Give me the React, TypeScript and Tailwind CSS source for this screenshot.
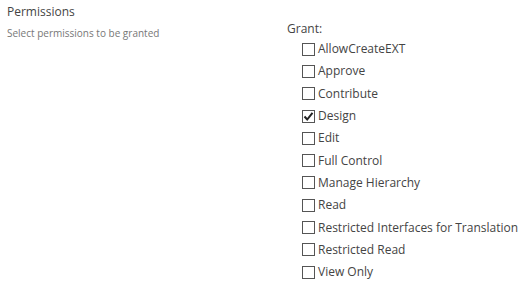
const permissions = [
  { name: 'AllowCreateEXT', checked: false },
  { name: 'Approve', checked: false },
  { name: 'Contribute', checked: false },
  { name: 'Design', checked: true },
  { name: 'Edit', checked: false },
  { name: 'Full Control', checked: false },
  { name: 'Manage Hierarchy', checked: false },
  { name: 'Read', checked: false },
  { name: 'Restricted Interfaces for Translation', checked: false },
  { name: 'Restricted Read', checked: false },
  { name: 'View Only', checked: false },
];

function CheckBox({ checked }: { checked: boolean }) {
  return (
    <span className="w-[13px] h-[13px] border border-[#555] bg-white flex items-center justify-center shrink-0">
      {checked && (
        <svg width="11" height="11" viewBox="0 0 11 11">
          <path d="M1.5 5.5 L4.2 8.5 L9.5 1.8" fill="none" stroke="#222" strokeWidth="2" />
        </svg>
      )}
    </span>
  );
}

export default function App() {
  return (
    <div
      className="w-[529px] h-[285px] bg-white flex text-[#444]"
      style={{ fontFamily: '"Open Sans", "Noto Sans", sans-serif' }}
    >
      <div className="w-[287px] pl-[7px] pt-[3px]">
        <div className="text-[12px] leading-[18px]">Permissions</div>
        <div className="text-[10px] leading-[14px] text-[#777] mt-[5px]">
          Select permissions to be granted
        </div>
      </div>
      <div className="pt-[20px]">
        <div className="text-[12px] leading-[18px]">Grant:</div>
        <div className="flex flex-col pl-[15px]">
          {permissions.map((p) => (
            <label key={p.name} className="flex items-center gap-[3px] h-[22.3px] text-[12px]">
              <CheckBox checked={p.checked} />
              <span className="whitespace-nowrap">{p.name}</span>
            </label>
          ))}
        </div>
      </div>
    </div>
  );
}
